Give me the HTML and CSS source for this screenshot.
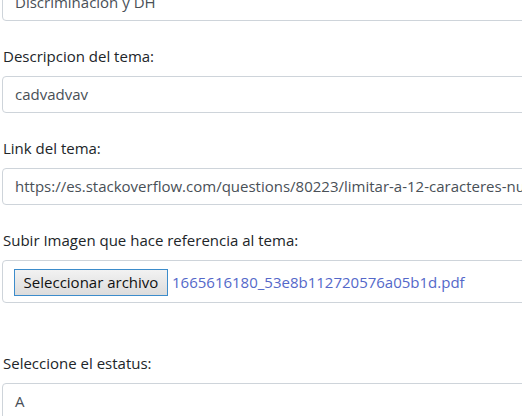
FILE: index.html
```html
<!DOCTYPE html>
<html lang="es">
<head>
<meta charset="utf-8">
<link rel="stylesheet" href="styles.css">
</head>
<body>
<form class="form">
  <div class="group">
    <div class="control">Discriminacion y DH</div>
  </div>
  <div class="group">
    <label class="label">Descripcion del tema:</label>
    <div class="control">cadvadvav</div>
  </div>
  <div class="group">
    <label class="label">Link del tema:</label>
    <div class="control">https://es.stackoverflow.com/questions/80223/limitar-a-12-caracteres-numericos-en-un-input</div>
  </div>
  <div class="group group-file">
    <label class="label">Subir Imagen que hace referencia al tema:</label>
    <div class="control control-file">
      <button type="button" class="file-btn">Seleccionar archivo</button>
      <span class="file-name">1665616180_53e8b112720576a05b1d.pdf</span>
    </div>
  </div>
  <div class="group">
    <label class="label">Seleccione el estatus:</label>
    <div class="control">A</div>
  </div>
</form>
</body>
</html>
```

FILE: styles.css
```css
html, body {
  margin: 0;
  padding: 0;
  background: #fff;
  overflow: hidden;
}
body {
  font-family: "Open Sans", "Noto Sans", sans-serif;
  font-size: 15px;
  color: #212529;
}
.form {
  margin-top: -16px;
  padding-left: 2px;
  width: 620px;
}
.group {
  margin-bottom: 23px;
}
.group-file {
  margin-bottom: 48px;
}
.label {
  display: block;
  height: 24px;
  line-height: 24px;
  margin-bottom: 8px;
  padding-left: 1px;
  white-space: nowrap;
}
.control {
  box-sizing: border-box;
  height: 37px;
  border: 1px solid #ced4da;
  border-radius: 4px;
  padding: 0 12px;
  color: #495057;
  line-height: 35px;
  white-space: nowrap;
  overflow: hidden;
}
.control-file {
  height: 43px;
  display: flex;
  align-items: center;
  padding: 0 11px;
  gap: 4px;
}
.file-btn {
  box-sizing: border-box;
  height: 27px;
  width: 154px;
  font-family: inherit;
  font-size: 15px;
  color: #111;
  padding: 0 6px;
  border: 1px solid #3c8ccb;
  border-radius: 0;
  background: linear-gradient(#f2f2f2, #dcdcdc);
  line-height: 25px;
  margin-top: 2px;
}
.file-name {
  color: #5468c9;
  line-height: 27px;
  margin-top: 2px;
}
```
